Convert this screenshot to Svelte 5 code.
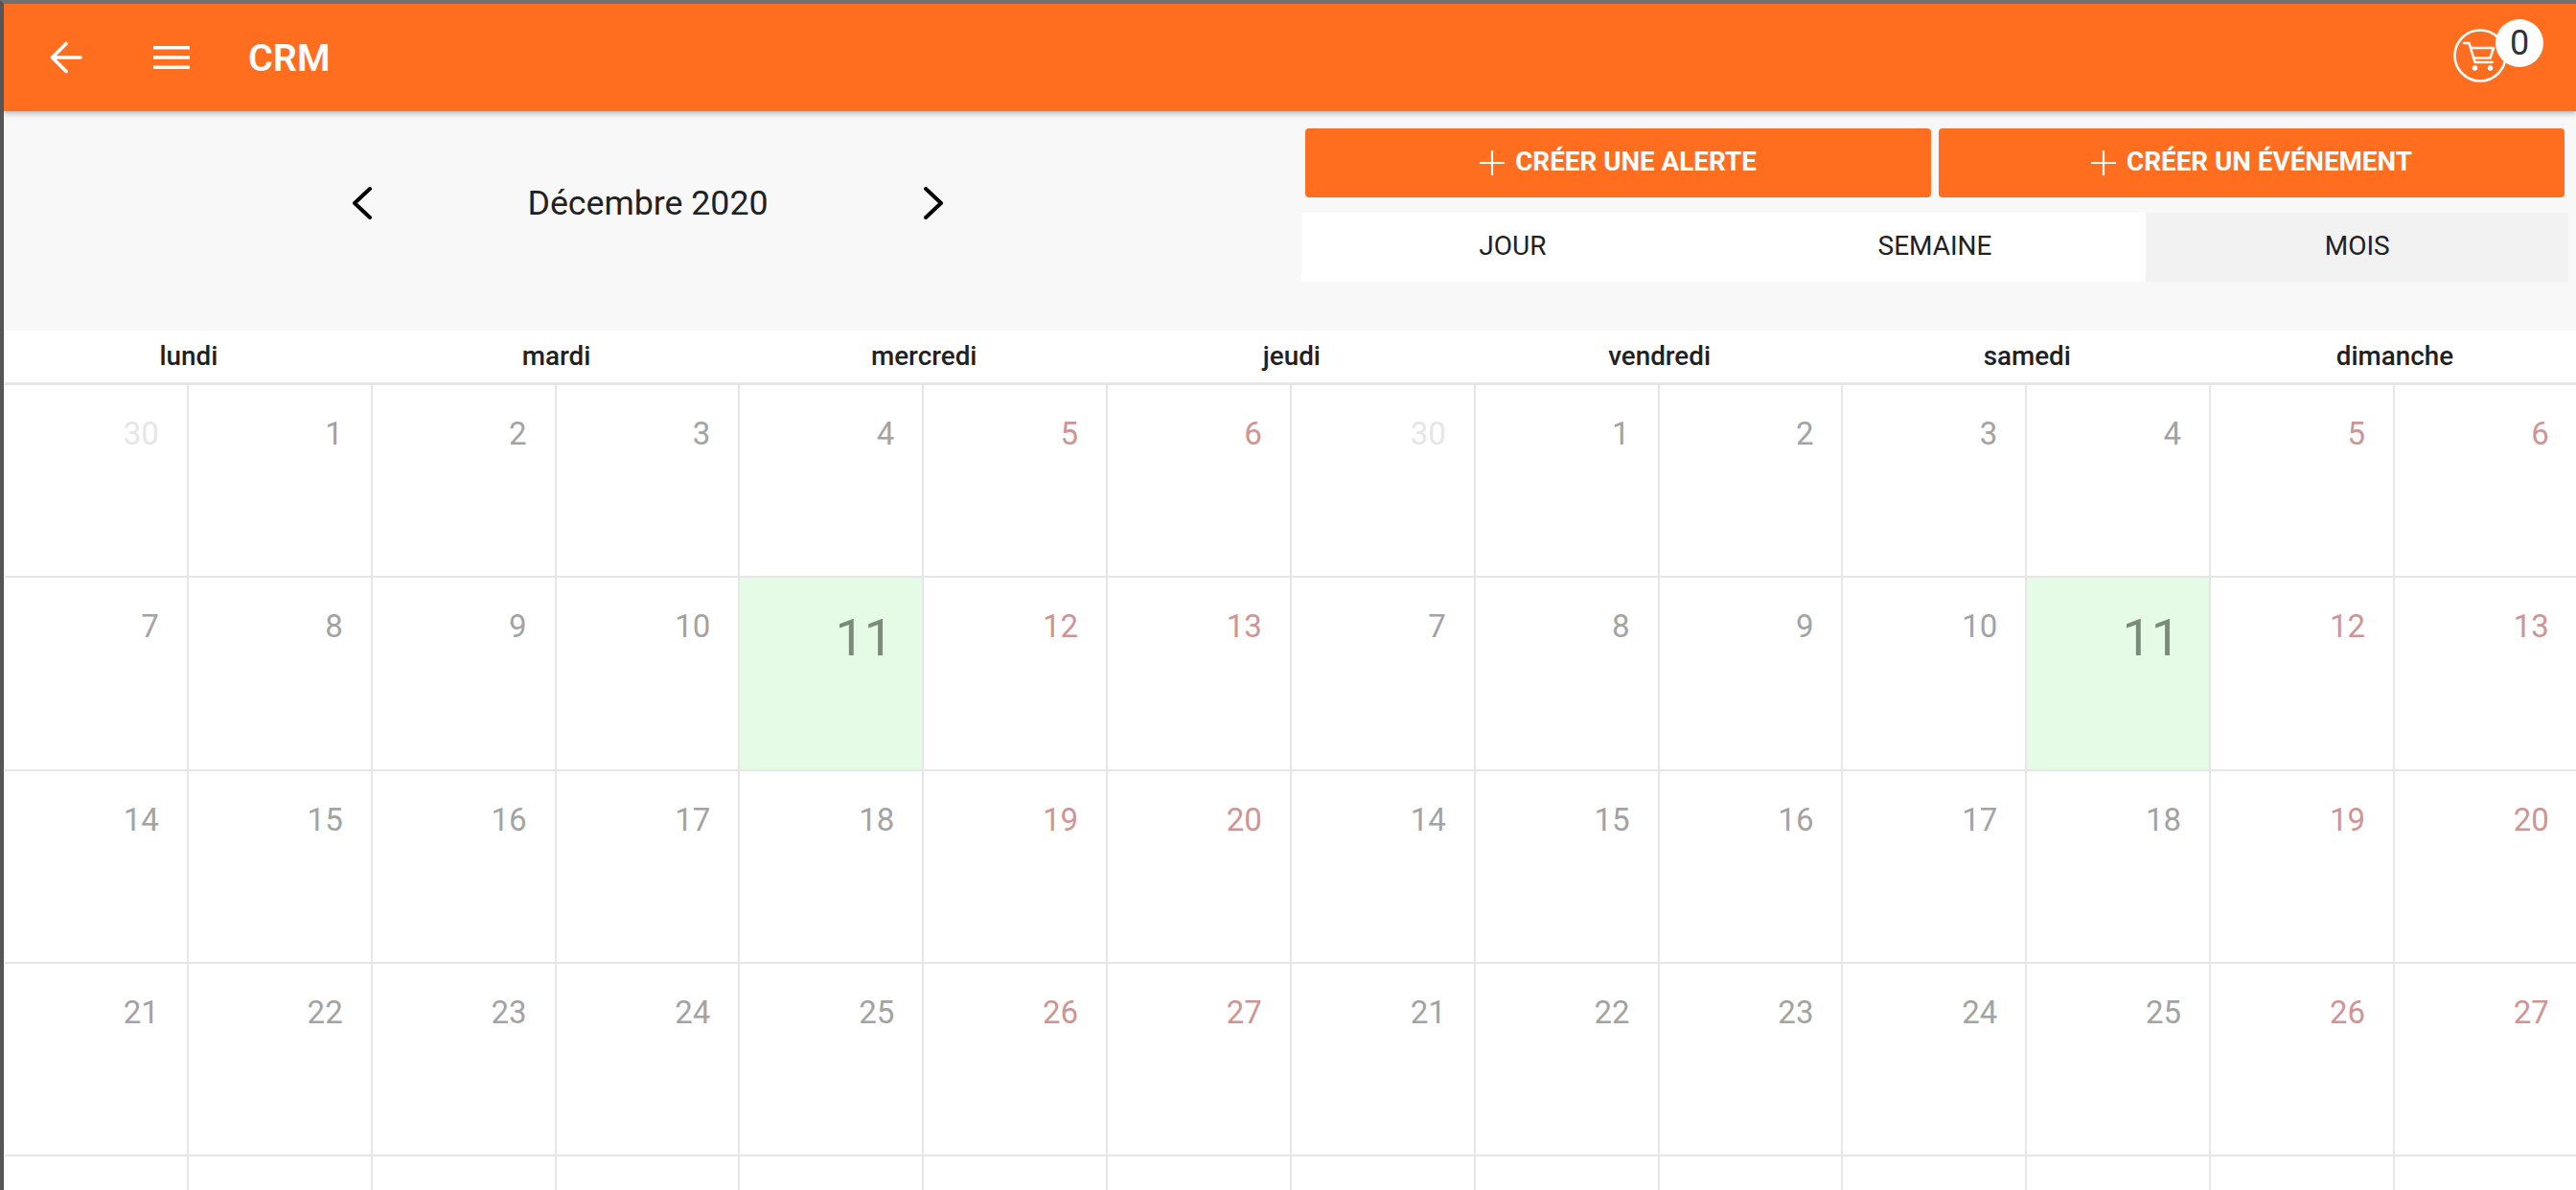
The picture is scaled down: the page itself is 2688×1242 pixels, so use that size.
<script>
	const weekdays = ['lundi', 'mardi', 'mercredi', 'jeudi', 'vendredi', 'samedi', 'dimanche']
	const tabs = ['JOUR', 'SEMAINE', 'MOIS']
	const actions = ['CRÉER UNE ALERTE', 'CRÉER UN ÉVÉNEMENT']

	// the month is drawn twice side by side, seven columns each
	const weeks = [
		[30, 1, 2, 3, 4, 5, 6],
		[7, 8, 9, 10, 11, 12, 13],
		[14, 15, 16, 17, 18, 19, 20],
		[21, 22, 23, 24, 25, 26, 27],
		[null, null, null, null, null, null, null]
	]
	const cells = weeks.flatMap((week) => [...week, ...week].map((day, i) => ({
		day,
		faded: day === 30,
		today: day === 11,
		weekend: i % 7 >= 5
	})))
</script>

<div class="frame">
	<header class="topbar">
		<svg class="back" viewBox="0 0 34 34" width="34" height="34" fill="none" stroke="#fff" stroke-width="3.6" stroke-linecap="round" stroke-linejoin="round">
			<path d="M32 17H3M17 2.500 2.500 17 17 31.500" />
		</svg>
		<svg class="burger" viewBox="0 0 38 24" width="38" height="24" fill="#fff">
			<rect y="0" width="38" height="3.500" />
			<rect y="10.250" width="38" height="3.500" />
			<rect y="20.500" width="38" height="3.500" />
		</svg>
		<span class="title">CRM</span>
		<div class="cart">
			<svg viewBox="0 0 56 56" width="56" height="56" fill="none" stroke="#fff" stroke-linecap="round" stroke-linejoin="round">
				<circle cx="28" cy="28" r="26.500" stroke-width="2.600" />
				<path stroke-width="2.600" d="M11 15h5.500l6 20h18M18 20h24l-3.500 10.500H21.500" />
				<circle cx="22.500" cy="41" r="2" fill="#fff" stroke-width="1.500" />
				<circle cx="38.500" cy="41" r="2" fill="#fff" stroke-width="1.500" />
			</svg>
			<span class="badge">0</span>
		</div>
	</header>

	<section class="toolbar">
		<div class="month">
			<svg viewBox="0 0 22 34" width="22" height="34" fill="none" stroke="#000" stroke-width="4" stroke-linecap="round" stroke-linejoin="round">
				<path d="M19 2 3 17l16 15" />
			</svg>
			<span>Décembre 2020</span>
			<svg viewBox="0 0 22 34" width="22" height="34" fill="none" stroke="#000" stroke-width="4" stroke-linecap="round" stroke-linejoin="round">
				<path d="m3 2 16 15L3 32" />
			</svg>
		</div>
		<div class="controls">
			<div class="actions">
				{#each actions as label}
					<button class="action">
						<svg viewBox="0 0 26 26" width="26" height="26" stroke="#fff" stroke-width="2.200">
							<path d="M0 13h26M13 0v26" />
						</svg>
						<span class="label">{label}</span>
					</button>
				{/each}
			</div>
			<div class="tabs">
				{#each tabs as tab}
					<div class="tab" class:active={tab === 'MOIS'}>{tab}</div>
				{/each}
			</div>
		</div>
	</section>

	<div class="calendar">
		<div class="weekdays">
			{#each weekdays as name}
				<div class="weekday">{name}</div>
			{/each}
		</div>
		<div class="grid">
			{#each cells as cell}
				<div class="cell" class:faded={cell.faded} class:today={cell.today} class:weekend={cell.weekend}>{cell.day ?? ''}</div>
			{/each}
		</div>
	</div>
</div>

<style>
	:global(body) {
		margin: 0;
		background: #fff;
	}

	.frame {
		width: 2688px;
		height: 1242px;
		box-sizing: border-box;
		overflow: hidden;
		display: flex;
		flex-direction: column;
		border-top: 4px solid #707070;
		border-left: 4px solid #555;
		font-family: Roboto, "Liberation Sans", sans-serif;
		color: #212121;
	}

	.topbar {
		height: 112px;
		flex: none;
		display: flex;
		align-items: center;
		background: #ff6d1f;
		box-shadow: 0 2px 6px rgba(0, 0, 0, 0.3);
		position: relative;
		z-index: 1;
	}

	.back {
		margin-left: 48px;
	}

	.burger {
		margin-left: 74px;
	}

	.title {
		margin-left: 61px;
		font-size: 39.500px;
		font-weight: 600;
		color: #fff;
	}

	.cart {
		position: relative;
		margin-left: auto;
		margin-right: 72px;
		width: 56px;
		height: 56px;
		margin-bottom: 4px;
	}

	.cart svg {
		display: block;
	}

	.badge {
		position: absolute;
		left: 44px;
		top: -10px;
		width: 50px;
		height: 50px;
		border-radius: 50%;
		background: #fff;
		color: #333;
		font-size: 36px;
		line-height: 50px;
		text-align: center;
	}

	.toolbar {
		height: 229px;
		flex: none;
		box-sizing: border-box;
		display: flex;
		background: #f8f8f8;
		padding: 18px 8px 0 0;
	}

	.month {
		width: 1354px;
		height: 156px;
		padding-right: 10px;
		box-sizing: border-box;
		display: flex;
		align-items: center;
		justify-content: center;
		gap: 161px;
		font-size: 35.700px;
	}

	.controls {
		flex: 1;
	}

	.actions {
		display: flex;
		gap: 8px;
		padding: 0 4px 0 4px;
	}

	.action {
		flex: 1;
		height: 72px;
		display: flex;
		align-items: center;
		justify-content: center;
		gap: 11px;
		border: none;
		border-radius: 4px;
		background: #ff6d1f;
		color: #fff;
		font-family: inherit;
		font-size: 27.800px;
		font-weight: 700;
	}

	.label {
		margin-bottom: 3px;
	}

	.tabs {
		display: flex;
		margin-top: 16px;
		height: 72px;
		background: #fff;
	}

	.tab {
		flex: 1;
		display: flex;
		align-items: center;
		justify-content: center;
		font-size: 28px;
		padding-bottom: 3px;
	}

	.tab.active {
		background: #f2f2f2;
	}

	.calendar {
		flex: 1;
		min-height: 0;
		padding-left: 1px;
	}

	.weekdays {
		display: grid;
		grid-template-columns: repeat(7, 383.700px);
		height: 54px;
		border-bottom: 3px solid #e6e6e6;
	}

	.weekday {
		text-align: center;
		font-size: 27.800px;
		font-weight: 500;
		line-height: 54px;
	}

	.grid {
		display: grid;
		grid-template-columns: repeat(14, 191.850px);
		grid-auto-rows: 201.250px;
	}

	.cell {
		box-sizing: border-box;
		border-right: 2px solid #e6e6e6;
		border-bottom: 2px solid #e6e6e6;
		padding: 31px 29px 0 0;
		text-align: right;
		font-size: 33px;
		font-weight: 400;
		line-height: 40px;
		color: #a3a3a3;
	}

	.cell.weekend {
		color: #cf9494;
	}

	.cell.faded {
		color: #e6e6e6;
	}

	.cell.today {
		background: #e6fbe6;
		font-size: 54px;
		padding-right: 30px;
		line-height: 64px;
		color: #7c8a7c;
	}
</style>
